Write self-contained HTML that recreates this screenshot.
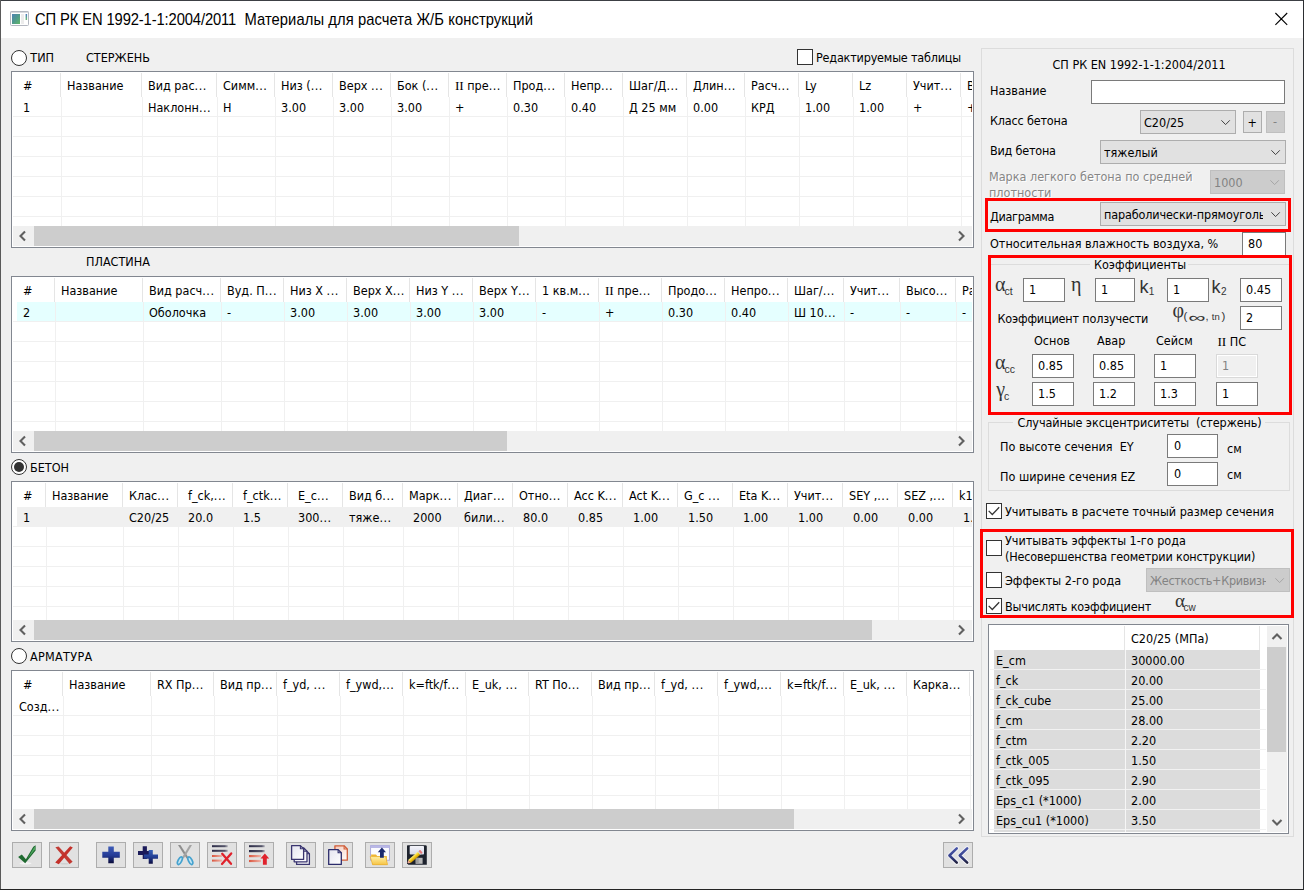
<!DOCTYPE html><html><head><meta charset="utf-8"><title>СП РК EN 1992-1-1:2004/2011</title><style>
*{box-sizing:border-box;margin:0;padding:0}
html,body{width:1304px;height:890px;overflow:hidden;background:#f0f0f0}
body{position:relative;font-family:"DejaVu Sans Condensed","DejaVu Sans","Liberation Sans",sans-serif;font-size:12.5px;color:#000;line-height:16px;font-stretch:condensed}
.a{position:absolute;white-space:nowrap}
.t{position:absolute;white-space:nowrap;height:16px;line-height:16px}
.dis{color:#868686}
.e{letter-spacing:0.5px}
.ii{font-family:"Liberation Serif",serif;font-stretch:normal;font-size:13.4px;letter-spacing:-0.15px;line-height:1px}
.tbl{position:absolute;border:1px solid #828790;background:#fff;overflow:hidden}
.hs{position:absolute;width:1px;background:#e5e5e5}
.vg{position:absolute;width:1px;background:#f0f0f0}
.hg{position:absolute;height:1px;background:#f0f0f0;left:0}
.sb{position:absolute;background:#f0f0f0}
.th{position:absolute;background:#cdcdcd}
.inp{position:absolute;background:#fff;border:1px solid #7a7a7a;height:24px}
.cmb{position:absolute;background:#e1e1e1;border:1px solid #adadad;height:24px;overflow:hidden}
.cmbd{position:absolute;background:#cccccc;border:1px solid #bfbfbf;height:24px;overflow:hidden}
.btn{position:absolute;background:#e1e1e1;border:1px solid #adadad}
.cb{position:absolute;width:16px;height:16px;background:#fff;border:1px solid #333}
.rd{position:absolute;width:16px;height:16px;background:#fff;border:1px solid #333;border-radius:50%}
.red{position:absolute;border:3px solid #ff0000}
.grp{position:absolute;border:1px solid #dcdcdc}
.ser{font-family:"Liberation Serif",serif;font-stretch:normal}
.ar{font-family:"Liberation Sans",sans-serif;font-stretch:normal}
</style></head><body>
<div class="a" style="left:0px;top:0px;width:1304px;height:1px;background:#3c3f44"></div>
<div class="a" style="left:0px;top:0px;width:1px;height:890px;background:#5a5a5a"></div>
<div class="a" style="left:0px;top:889px;width:1304px;height:1px;background:#242424"></div>
<div class="a" style="left:1303px;top:0px;width:1px;height:890px;background:#2c2e32"></div>
<div class="a" style="left:1px;top:1px;width:1302px;height:37px;background:#fff"></div>
<svg class="a" style="left:10px;top:11px" width="19" height="15" viewBox="0 0 19 15"><defs><linearGradient id="ig" x1="0" y1="0" x2="1" y2="1"><stop offset="0" stop-color="#4f82b4"/><stop offset="0.5" stop-color="#4f9a8c"/><stop offset="1" stop-color="#62b868"/></linearGradient><linearGradient id="ig2" x1="0" y1="0" x2="0" y2="1"><stop offset="0" stop-color="#4a78c0"/><stop offset="1" stop-color="#6cc070"/></linearGradient></defs><rect x="0.5" y="0.5" width="18" height="14" rx="1" fill="#fff" stroke="#b3b7c0"/><rect x="0.5" y="0.5" width="18" height="1" fill="#b3b7c0"/><rect x="2" y="3" width="8" height="10" fill="url(#ig)"/><rect x="11" y="3" width="3" height="10" fill="#ececec"/><rect x="15.6" y="3" width="1.5" height="6" fill="url(#ig2)"/></svg>
<div class="a ar" id="title" style="left:35px;top:10px;font-size:15.75px;line-height:20px;height:20px;transform:scaleX(0.9364);transform-origin:0 0;"><span style="letter-spacing:-0.12px">СП РК EN 1992-1-1:2004/2011</span>  <span style="letter-spacing:0.085px">Материалы для расчета Ж/Б конструкций</span></div>
<svg class="a" style="left:1274px;top:12px" width="14" height="14" viewBox="0 0 14 14"><path d="M1.4 1 L13.2 12.8 M13.2 1 L1.4 12.8" stroke="#000" stroke-width="1.1" fill="none"/></svg>
<div class="rd" style="left:11px;top:49.5px;width:16px;height:16px;"></div>
<div class="t " style="left:30.3px;top:50px;">ТИП</div>
<div class="t " style="left:86px;top:50px;">СТЕРЖЕНЬ</div>
<div class="t " style="left:86px;top:254px;">ПЛАСТИНА</div>
<div class="rd" style="left:11px;top:459px;width:16px;height:16px;"></div>
<div class="a" style="left:14px;top:462px;width:10px;height:10px;background:#333;border-radius:50%"></div>
<div class="t " style="left:30px;top:460px;">БЕТОН</div>
<div class="rd" style="left:11px;top:648px;width:16px;height:16px;"></div>
<div class="t " style="left:30px;top:649px;letter-spacing:0.3px">АРМАТУРА</div>
<div class="cb" style="left:797px;top:49px;width:16px;height:16px;"></div>
<div class="t " style="left:816px;top:50px;letter-spacing:-0.19px">Редактируемые таблицы</div>
<div class="tbl" style="left:11px;top:71px;width:963px;height:177px">
<div class="a" style="left:1px;top:1px;width:959px;height:173px;overflow:hidden">
<div class="hs" style="left:47px;top:0px;height:24px"></div>
<div class="hs" style="left:128px;top:0px;height:24px"></div>
<div class="hs" style="left:203px;top:0px;height:24px"></div>
<div class="hs" style="left:261px;top:0px;height:24px"></div>
<div class="hs" style="left:319px;top:0px;height:24px"></div>
<div class="hs" style="left:377px;top:0px;height:24px"></div>
<div class="hs" style="left:435px;top:0px;height:24px"></div>
<div class="hs" style="left:493px;top:0px;height:24px"></div>
<div class="hs" style="left:551px;top:0px;height:24px"></div>
<div class="hs" style="left:609px;top:0px;height:24px"></div>
<div class="hs" style="left:673px;top:0px;height:24px"></div>
<div class="hs" style="left:731px;top:0px;height:24px"></div>
<div class="hs" style="left:785px;top:0px;height:24px"></div>
<div class="hs" style="left:839px;top:0px;height:24px"></div>
<div class="hs" style="left:893px;top:0px;height:24px"></div>
<div class="hs" style="left:947px;top:0px;height:24px"></div>
<div class="vg" style="left:48px;top:24px;height:129px"></div>
<div class="vg" style="left:129px;top:24px;height:129px"></div>
<div class="vg" style="left:204px;top:24px;height:129px"></div>
<div class="vg" style="left:262px;top:24px;height:129px"></div>
<div class="vg" style="left:320px;top:24px;height:129px"></div>
<div class="vg" style="left:378px;top:24px;height:129px"></div>
<div class="vg" style="left:436px;top:24px;height:129px"></div>
<div class="vg" style="left:494px;top:24px;height:129px"></div>
<div class="vg" style="left:552px;top:24px;height:129px"></div>
<div class="vg" style="left:610px;top:24px;height:129px"></div>
<div class="vg" style="left:674px;top:24px;height:129px"></div>
<div class="vg" style="left:732px;top:24px;height:129px"></div>
<div class="vg" style="left:786px;top:24px;height:129px"></div>
<div class="vg" style="left:840px;top:24px;height:129px"></div>
<div class="vg" style="left:894px;top:24px;height:129px"></div>
<div class="vg" style="left:948px;top:24px;height:129px"></div>
<div class="hg" style="top:43px;width:959px"></div>
<div class="hg" style="top:63px;width:959px"></div>
<div class="hg" style="top:83px;width:959px"></div>
<div class="hg" style="top:103px;width:959px"></div>
<div class="hg" style="top:123px;width:959px"></div>
<div class="hg" style="top:143px;width:959px"></div>
<div class="t" style="left:10px;top:5px">#</div>
<div class="t" style="left:54px;top:5px">Название</div>
<div class="t" style="left:135px;top:5px">Вид рас<span class="e">...</span></div>
<div class="t" style="left:210px;top:5px">Симм<span class="e">...</span></div>
<div class="t" style="left:268px;top:5px">Низ (<span class="e">...</span></div>
<div class="t" style="left:326px;top:5px">Верх <span class="e">...</span></div>
<div class="t" style="left:384px;top:5px">Бок (<span class="e">...</span></div>
<div class="t" style="left:442px;top:5px"><span class="ii">II</span> пре<span class="e">...</span></div>
<div class="t" style="left:500px;top:5px">Прод<span class="e">...</span></div>
<div class="t" style="left:558px;top:5px">Непр<span class="e">...</span></div>
<div class="t" style="left:616px;top:5px">Шаг/Д<span class="e">...</span></div>
<div class="t" style="left:680px;top:5px">Длин<span class="e">...</span></div>
<div class="t" style="left:738px;top:5px">Расч<span class="e">...</span></div>
<div class="t" style="left:792px;top:5px">Ly</div>
<div class="t" style="left:846px;top:5px">Lz</div>
<div class="t" style="left:900px;top:5px">Учит<span class="e">...</span></div>
<div class="t" style="left:954px;top:5px">В</div>
<div class="t" style="left:10px;top:27px">1</div>
<div class="t" style="left:135px;top:27px">Наклонн<span class="e">...</span></div>
<div class="t" style="left:210px;top:27px">Н</div>
<div class="t" style="left:268px;top:27px">3.00</div>
<div class="t" style="left:326px;top:27px">3.00</div>
<div class="t" style="left:384px;top:27px">3.00</div>
<div class="t" style="left:442px;top:27px">+</div>
<div class="t" style="left:500px;top:27px">0.30</div>
<div class="t" style="left:558px;top:27px">0.40</div>
<div class="t" style="left:616px;top:27px">Д 25 мм</div>
<div class="t" style="left:680px;top:27px">0.00</div>
<div class="t" style="left:738px;top:27px">КРД</div>
<div class="t" style="left:792px;top:27px">1.00</div>
<div class="t" style="left:846px;top:27px">1.00</div>
<div class="t" style="left:900px;top:27px">+</div>
<div class="t" style="left:954px;top:27px">+</div>
<div class="sb" style="left:0;top:153px;width:959px;height:20px"></div>
<div class="th" style="left:21px;top:153px;width:485px;height:20px"></div>
</div></div>
<svg class="a" style="left:15.5px;top:229px" width="14" height="14" viewBox="-7 -7 14 14"><path d="M2 -4.5 L-2.5 0 L2 4.5" stroke="#606060" stroke-width="2.1" fill="none"/></svg>
<svg class="a" style="left:953.8px;top:229px" width="14" height="14" viewBox="-7 -7 14 14"><path d="M-2 -4.5 L2.5 0 L-2 4.5" stroke="#606060" stroke-width="2.1" fill="none"/></svg>
<div class="tbl" style="left:11px;top:276px;width:963px;height:177px">
<div class="a" style="left:1px;top:1px;width:959px;height:173px;overflow:hidden">
<div class="a" style="left:4px;top:24px;width:955px;height:19px;background:#e5ffff"></div>
<div class="hs" style="left:41px;top:0px;height:24px"></div>
<div class="hs" style="left:129px;top:0px;height:24px"></div>
<div class="hs" style="left:207px;top:0px;height:24px"></div>
<div class="hs" style="left:270px;top:0px;height:24px"></div>
<div class="hs" style="left:333px;top:0px;height:24px"></div>
<div class="hs" style="left:396px;top:0px;height:24px"></div>
<div class="hs" style="left:459px;top:0px;height:24px"></div>
<div class="hs" style="left:522px;top:0px;height:24px"></div>
<div class="hs" style="left:585px;top:0px;height:24px"></div>
<div class="hs" style="left:648px;top:0px;height:24px"></div>
<div class="hs" style="left:711px;top:0px;height:24px"></div>
<div class="hs" style="left:774px;top:0px;height:24px"></div>
<div class="hs" style="left:830px;top:0px;height:24px"></div>
<div class="hs" style="left:886px;top:0px;height:24px"></div>
<div class="hs" style="left:942px;top:0px;height:24px"></div>
<div class="vg" style="left:42px;top:24px;height:129px"></div>
<div class="vg" style="left:130px;top:24px;height:129px"></div>
<div class="vg" style="left:208px;top:24px;height:129px"></div>
<div class="vg" style="left:271px;top:24px;height:129px"></div>
<div class="vg" style="left:334px;top:24px;height:129px"></div>
<div class="vg" style="left:397px;top:24px;height:129px"></div>
<div class="vg" style="left:460px;top:24px;height:129px"></div>
<div class="vg" style="left:523px;top:24px;height:129px"></div>
<div class="vg" style="left:586px;top:24px;height:129px"></div>
<div class="vg" style="left:649px;top:24px;height:129px"></div>
<div class="vg" style="left:712px;top:24px;height:129px"></div>
<div class="vg" style="left:775px;top:24px;height:129px"></div>
<div class="vg" style="left:831px;top:24px;height:129px"></div>
<div class="vg" style="left:887px;top:24px;height:129px"></div>
<div class="vg" style="left:943px;top:24px;height:129px"></div>
<div class="hg" style="top:43px;width:959px"></div>
<div class="hg" style="top:63px;width:959px"></div>
<div class="hg" style="top:83px;width:959px"></div>
<div class="hg" style="top:103px;width:959px"></div>
<div class="hg" style="top:123px;width:959px"></div>
<div class="hg" style="top:143px;width:959px"></div>
<div class="t" style="left:10px;top:5px">#</div>
<div class="t" style="left:48px;top:5px">Название</div>
<div class="t" style="left:136px;top:5px">Вид расч<span class="e">...</span></div>
<div class="t" style="left:214px;top:5px">Вуд. П<span class="e">...</span></div>
<div class="t" style="left:277px;top:5px">Низ X <span class="e">...</span></div>
<div class="t" style="left:340px;top:5px">Верх X<span class="e">...</span></div>
<div class="t" style="left:403px;top:5px">Низ Y <span class="e">...</span></div>
<div class="t" style="left:466px;top:5px">Верх Y<span class="e">...</span></div>
<div class="t" style="left:529px;top:5px">1 кв.м<span class="e">...</span></div>
<div class="t" style="left:592px;top:5px"><span class="ii">II</span> пре<span class="e">...</span></div>
<div class="t" style="left:655px;top:5px">Продо<span class="e">...</span></div>
<div class="t" style="left:718px;top:5px">Непро<span class="e">...</span></div>
<div class="t" style="left:781px;top:5px">Шаг/<span class="e">...</span></div>
<div class="t" style="left:837px;top:5px">Учит<span class="e">...</span></div>
<div class="t" style="left:893px;top:5px">Высо<span class="e">...</span></div>
<div class="t" style="left:949px;top:5px">Ра</div>
<div class="t" style="left:10px;top:27px">2</div>
<div class="t" style="left:136px;top:27px">Оболочка</div>
<div class="t" style="left:214px;top:27px">-</div>
<div class="t" style="left:277px;top:27px">3.00</div>
<div class="t" style="left:340px;top:27px">3.00</div>
<div class="t" style="left:403px;top:27px">3.00</div>
<div class="t" style="left:466px;top:27px">3.00</div>
<div class="t" style="left:529px;top:27px">-</div>
<div class="t" style="left:592px;top:27px">+</div>
<div class="t" style="left:655px;top:27px">0.30</div>
<div class="t" style="left:718px;top:27px">0.40</div>
<div class="t" style="left:781px;top:27px">Ш 10<span class="e">...</span></div>
<div class="t" style="left:837px;top:27px">-</div>
<div class="t" style="left:893px;top:27px">-</div>
<div class="t" style="left:949px;top:27px">-</div>
<div class="sb" style="left:0;top:153px;width:959px;height:20px"></div>
<div class="th" style="left:21px;top:153px;width:473px;height:20px"></div>
</div></div>
<svg class="a" style="left:15.5px;top:434px" width="14" height="14" viewBox="-7 -7 14 14"><path d="M2 -4.5 L-2.5 0 L2 4.5" stroke="#606060" stroke-width="2.1" fill="none"/></svg>
<svg class="a" style="left:953.8px;top:434px" width="14" height="14" viewBox="-7 -7 14 14"><path d="M-2 -4.5 L2.5 0 L-2 4.5" stroke="#606060" stroke-width="2.1" fill="none"/></svg>
<div class="tbl" style="left:11px;top:481px;width:963px;height:161px">
<div class="a" style="left:1px;top:1px;width:959px;height:157px;overflow:hidden">
<div class="a" style="left:4px;top:24px;width:955px;height:19px;background:#f0f0f0"></div>
<div class="hs" style="left:32px;top:0px;height:24px"></div>
<div class="hs" style="left:109px;top:0px;height:24px"></div>
<div class="hs" style="left:164px;top:0px;height:24px"></div>
<div class="hs" style="left:219px;top:0px;height:24px"></div>
<div class="hs" style="left:274px;top:0px;height:24px"></div>
<div class="hs" style="left:329px;top:0px;height:24px"></div>
<div class="hs" style="left:389px;top:0px;height:24px"></div>
<div class="hs" style="left:444px;top:0px;height:24px"></div>
<div class="hs" style="left:499px;top:0px;height:24px"></div>
<div class="hs" style="left:554px;top:0px;height:24px"></div>
<div class="hs" style="left:609px;top:0px;height:24px"></div>
<div class="hs" style="left:664px;top:0px;height:24px"></div>
<div class="hs" style="left:719px;top:0px;height:24px"></div>
<div class="hs" style="left:774px;top:0px;height:24px"></div>
<div class="hs" style="left:829px;top:0px;height:24px"></div>
<div class="hs" style="left:884px;top:0px;height:24px"></div>
<div class="hs" style="left:939px;top:0px;height:24px"></div>
<div class="vg" style="left:33px;top:24px;height:113px"></div>
<div class="vg" style="left:110px;top:24px;height:113px"></div>
<div class="vg" style="left:165px;top:24px;height:113px"></div>
<div class="vg" style="left:220px;top:24px;height:113px"></div>
<div class="vg" style="left:275px;top:24px;height:113px"></div>
<div class="vg" style="left:330px;top:24px;height:113px"></div>
<div class="vg" style="left:390px;top:24px;height:113px"></div>
<div class="vg" style="left:445px;top:24px;height:113px"></div>
<div class="vg" style="left:500px;top:24px;height:113px"></div>
<div class="vg" style="left:555px;top:24px;height:113px"></div>
<div class="vg" style="left:610px;top:24px;height:113px"></div>
<div class="vg" style="left:665px;top:24px;height:113px"></div>
<div class="vg" style="left:720px;top:24px;height:113px"></div>
<div class="vg" style="left:775px;top:24px;height:113px"></div>
<div class="vg" style="left:830px;top:24px;height:113px"></div>
<div class="vg" style="left:885px;top:24px;height:113px"></div>
<div class="vg" style="left:940px;top:24px;height:113px"></div>
<div class="hg" style="top:43px;width:959px"></div>
<div class="hg" style="top:63px;width:959px"></div>
<div class="hg" style="top:83px;width:959px"></div>
<div class="hg" style="top:103px;width:959px"></div>
<div class="hg" style="top:123px;width:959px"></div>
<div class="t" style="left:10px;top:5px">#</div>
<div class="t" style="left:39px;top:5px">Название</div>
<div class="t" style="left:116px;top:5px">Клас<span class="e">...</span></div>
<div class="t" style="left:175px;top:5px">f_ck,<span class="e">...</span></div>
<div class="t" style="left:230px;top:5px">f_ctk<span class="e">...</span></div>
<div class="t" style="left:285px;top:5px">E_c<span class="e">...</span></div>
<div class="t" style="left:336px;top:5px">Вид б<span class="e">...</span></div>
<div class="t" style="left:396px;top:5px">Марк<span class="e">...</span></div>
<div class="t" style="left:451px;top:5px">Диаг<span class="e">...</span></div>
<div class="t" style="left:506px;top:5px">Отно<span class="e">...</span></div>
<div class="t" style="left:561px;top:5px">Acc K<span class="e">...</span></div>
<div class="t" style="left:616px;top:5px">Act K<span class="e">...</span></div>
<div class="t" style="left:671px;top:5px">G_c <span class="e">...</span></div>
<div class="t" style="left:726px;top:5px">Eta K<span class="e">...</span></div>
<div class="t" style="left:781px;top:5px">Учит<span class="e">...</span></div>
<div class="t" style="left:836px;top:5px">SEY ,<span class="e">...</span></div>
<div class="t" style="left:891px;top:5px">SEZ ,<span class="e">...</span></div>
<div class="t" style="left:946px;top:5px">k1</div>
<div class="t" style="left:10px;top:27px">1</div>
<div class="t" style="left:116px;top:27px">C20/25</div>
<div class="t" style="left:175px;top:27px">20.0</div>
<div class="t" style="left:230px;top:27px">1.5</div>
<div class="t" style="left:285px;top:27px">300<span class="e">...</span></div>
<div class="t" style="left:336px;top:27px">тяже<span class="e">...</span></div>
<div class="t" style="left:400px;top:27px">2000</div>
<div class="t" style="left:451px;top:27px">били<span class="e">...</span></div>
<div class="t" style="left:510px;top:27px">80.0</div>
<div class="t" style="left:565px;top:27px">0.85</div>
<div class="t" style="left:620px;top:27px">1.00</div>
<div class="t" style="left:675px;top:27px">1.50</div>
<div class="t" style="left:730px;top:27px">1.00</div>
<div class="t" style="left:785px;top:27px">1.00</div>
<div class="t" style="left:840px;top:27px">0.00</div>
<div class="t" style="left:895px;top:27px">0.00</div>
<div class="t" style="left:950px;top:27px">1.</div>
<div class="sb" style="left:0;top:137px;width:959px;height:20px"></div>
<div class="th" style="left:21px;top:137px;width:838px;height:20px"></div>
</div></div>
<svg class="a" style="left:15.5px;top:623px" width="14" height="14" viewBox="-7 -7 14 14"><path d="M2 -4.5 L-2.5 0 L2 4.5" stroke="#606060" stroke-width="2.1" fill="none"/></svg>
<svg class="a" style="left:953.8px;top:623px" width="14" height="14" viewBox="-7 -7 14 14"><path d="M-2 -4.5 L2.5 0 L-2 4.5" stroke="#606060" stroke-width="2.1" fill="none"/></svg>
<div class="tbl" style="left:11px;top:670px;width:963px;height:161px">
<div class="a" style="left:1px;top:1px;width:959px;height:157px;overflow:hidden">
<div class="hs" style="left:49px;top:0px;height:24px"></div>
<div class="hs" style="left:137px;top:0px;height:24px"></div>
<div class="hs" style="left:200px;top:0px;height:24px"></div>
<div class="hs" style="left:263px;top:0px;height:24px"></div>
<div class="hs" style="left:326px;top:0px;height:24px"></div>
<div class="hs" style="left:389px;top:0px;height:24px"></div>
<div class="hs" style="left:452px;top:0px;height:24px"></div>
<div class="hs" style="left:515px;top:0px;height:24px"></div>
<div class="hs" style="left:578px;top:0px;height:24px"></div>
<div class="hs" style="left:641px;top:0px;height:24px"></div>
<div class="hs" style="left:704px;top:0px;height:24px"></div>
<div class="hs" style="left:767px;top:0px;height:24px"></div>
<div class="hs" style="left:830px;top:0px;height:24px"></div>
<div class="hs" style="left:893px;top:0px;height:24px"></div>
<div class="hs" style="left:956px;top:0px;height:24px"></div>
<div class="vg" style="left:50px;top:24px;height:113px"></div>
<div class="vg" style="left:138px;top:24px;height:113px"></div>
<div class="vg" style="left:201px;top:24px;height:113px"></div>
<div class="vg" style="left:264px;top:24px;height:113px"></div>
<div class="vg" style="left:327px;top:24px;height:113px"></div>
<div class="vg" style="left:390px;top:24px;height:113px"></div>
<div class="vg" style="left:453px;top:24px;height:113px"></div>
<div class="vg" style="left:516px;top:24px;height:113px"></div>
<div class="vg" style="left:579px;top:24px;height:113px"></div>
<div class="vg" style="left:642px;top:24px;height:113px"></div>
<div class="vg" style="left:705px;top:24px;height:113px"></div>
<div class="vg" style="left:768px;top:24px;height:113px"></div>
<div class="vg" style="left:831px;top:24px;height:113px"></div>
<div class="vg" style="left:894px;top:24px;height:113px"></div>
<div class="vg" style="left:957px;top:24px;height:113px"></div>
<div class="hg" style="top:43px;width:959px"></div>
<div class="hg" style="top:63px;width:959px"></div>
<div class="hg" style="top:83px;width:959px"></div>
<div class="hg" style="top:103px;width:959px"></div>
<div class="hg" style="top:123px;width:959px"></div>
<div class="t" style="left:10px;top:5px">#</div>
<div class="t" style="left:56px;top:5px">Название</div>
<div class="t" style="left:144px;top:5px">RX Пр<span class="e">...</span></div>
<div class="t" style="left:207px;top:5px">Вид пр<span class="e">...</span></div>
<div class="t" style="left:270px;top:5px">f_yd, <span class="e">...</span></div>
<div class="t" style="left:333px;top:5px">f_ywd,<span class="e">...</span></div>
<div class="t" style="left:396px;top:5px">k=ftk/f<span class="e">...</span></div>
<div class="t" style="left:459px;top:5px">E_uk, <span class="e">...</span></div>
<div class="t" style="left:522px;top:5px">RT По<span class="e">...</span></div>
<div class="t" style="left:585px;top:5px">Вид пр<span class="e">...</span></div>
<div class="t" style="left:648px;top:5px">f_yd, <span class="e">...</span></div>
<div class="t" style="left:711px;top:5px">f_ywd,<span class="e">...</span></div>
<div class="t" style="left:774px;top:5px">k=ftk/f<span class="e">...</span></div>
<div class="t" style="left:837px;top:5px">E_uk, <span class="e">...</span></div>
<div class="t" style="left:900px;top:5px">Карка<span class="e">...</span></div>
<div class="t" style="left:6px;top:27px">Созд<span class="e">...</span></div>
<div class="sb" style="left:0;top:137px;width:959px;height:20px"></div>
<div class="th" style="left:21px;top:137px;width:760px;height:20px"></div>
</div></div>
<svg class="a" style="left:15.5px;top:812px" width="14" height="14" viewBox="-7 -7 14 14"><path d="M2 -4.5 L-2.5 0 L2 4.5" stroke="#606060" stroke-width="2.1" fill="none"/></svg>
<svg class="a" style="left:953.8px;top:812px" width="14" height="14" viewBox="-7 -7 14 14"><path d="M-2 -4.5 L2.5 0 L-2 4.5" stroke="#606060" stroke-width="2.1" fill="none"/></svg>
<div class="btn" style="left:12px;top:842px;width:30px;height:26px;"><svg style="position:absolute;left:-1px;top:-1px" width="30" height="26" viewBox="0 0 30 26"><ellipse cx="13.5" cy="21.3" rx="6" ry="1.2" fill="#f4f4f4"/><path d="M6.1 14.9 L9.8 12.6 L13.9 17.3 L21.3 4.7 L23.6 3.2 L23.6 8.4 L13.2 21.3 Z" fill="#1f6a30"/><path d="M15.2 17 L22.4 5 L23 5.2 L23 7.4 Z" fill="#4fa860"/></svg></div>
<div class="btn" style="left:49px;top:842px;width:30px;height:26px;"><svg style="position:absolute;left:-1px;top:-1px" width="30" height="26" viewBox="0 0 30 26"><ellipse cx="15.5" cy="21.8" rx="4.5" ry="0.8" fill="#cfcfcf"/><path d="M6.4 5.2 L9.6 4.4 L23.6 19.8 L20.6 21.9 Z" fill="#c23a33"/><path d="M21.2 4.2 L23.8 5.4 L9.8 22.2 L6.2 20.4 Z" fill="#c4302a"/></svg></div>
<div class="btn" style="left:96px;top:842px;width:30px;height:26px;"><svg style="position:absolute;left:-1px;top:-1px" width="30" height="26" viewBox="0 0 30 26"><defs><linearGradient id="gp" x1="0" y1="0" x2="0" y2="1"><stop offset="0" stop-color="#3e5cb8"/><stop offset="0.55" stop-color="#243a94"/><stop offset="1" stop-color="#0a0a38"/></linearGradient></defs><path d="M12.3 4.5 H17.8 V9.8 H23.8 V15.8 H17.8 V21.3 H12.3 V15.8 H6.3 V9.8 H12.3 Z" fill="url(#gp)"/></svg></div>
<div class="btn" style="left:133px;top:842px;width:30px;height:26px;"><svg style="position:absolute;left:-1px;top:-1px" width="30" height="26" viewBox="0 0 30 26"><defs><linearGradient id="gp2" x1="0" y1="0" x2="0" y2="1"><stop offset="0" stop-color="#3560b8"/><stop offset="0.5" stop-color="#233f94"/><stop offset="1" stop-color="#0c0c40"/></linearGradient></defs><path d="M9.7 4.3 H13.9 V8.9 H18.5 V13 H13.9 V17 H9.7 V13 H5 V8.9 H9.7 Z" fill="#1b1b5a"/><path d="M15.7 8 H19.8 V12.5 H25 V16.7 H19.8 V21.8 H15.7 V16.7 H11 V12.5 H15.7 Z" fill="url(#gp2)"/></svg></div>
<div class="btn" style="left:170px;top:842px;width:30px;height:26px;"><svg style="position:absolute;left:-1px;top:-1px" width="30" height="26" viewBox="0 0 30 26"><path d="M8 3 L10.4 3 L18.4 15.4 L16.6 16.4 Z" fill="#8e8e8e"/><path d="M22 3 L19.6 3 L12 15.4 L13.8 16.4 Z" fill="#a4a4a4"/><ellipse cx="9.9" cy="18.7" rx="1.8" ry="4.1" transform="rotate(26 9.9 18.7)" fill="#c4e6f4" stroke="#45a2cf" stroke-width="1.7"/><ellipse cx="20.3" cy="18.7" rx="1.8" ry="4.1" transform="rotate(-26 20.3 18.7)" fill="#c4e6f4" stroke="#45a2cf" stroke-width="1.7"/></svg></div>
<div class="btn" style="left:207px;top:842px;width:30px;height:26px;"><svg style="position:absolute;left:-1px;top:-1px" width="30" height="26" viewBox="0 0 30 26"><defs><linearGradient id="gd" x1="0" y1="0" x2="1" y2="0"><stop offset="0" stop-color="#2c2c48"/><stop offset="0.8" stop-color="#55556a"/><stop offset="1" stop-color="#b0b0b8"/></linearGradient><linearGradient id="gr" x1="0" y1="0" x2="1" y2="0"><stop offset="0" stop-color="#d9553f"/><stop offset="1" stop-color="#f0b4a8"/></linearGradient></defs><rect x="5" y="3.2" width="15.8" height="2" fill="url(#gd)"/><rect x="5" y="7.8" width="15.8" height="2" fill="url(#gd)"/><rect x="5" y="13" width="10" height="2" fill="url(#gr)"/><rect x="5" y="17.6" width="10" height="2" fill="url(#gr)"/><path d="M15.2 11.8 L24 21.8 M24.2 11.4 L15 22" stroke="#e0222c" stroke-width="2.3" stroke-linecap="round" fill="none"/></svg></div>
<div class="btn" style="left:244px;top:842px;width:30px;height:26px;"><svg style="position:absolute;left:-1px;top:-1px" width="30" height="26" viewBox="0 0 30 26"><rect x="5" y="3.2" width="15.8" height="2" fill="url(#gd)"/><rect x="5" y="8" width="15.8" height="2.2" fill="url(#gd)"/><rect x="5" y="13" width="12" height="2.2" fill="url(#gr)"/><rect x="5" y="17.9" width="12" height="2.2" fill="url(#gr)"/><path d="M20.85 11.4 L25.2 16.6 H22.8 V22.7 H18.9 V16.6 H16.5 Z" fill="#e0222c"/></svg></div>
<div class="btn" style="left:286px;top:842px;width:30px;height:26px;"><svg style="position:absolute;left:-1px;top:-1px" width="30" height="26" viewBox="0 0 30 26"><defs><linearGradient id="gw" x1="0" y1="0" x2="1" y2="1"><stop offset="0" stop-color="#e4e4f0"/><stop offset="1" stop-color="#ffffff"/></linearGradient><linearGradient id="go" x1="0" y1="0" x2="1" y2="1"><stop offset="0" stop-color="#f4c8b8"/><stop offset="1" stop-color="#ffffff"/></linearGradient></defs><path d="M10.6 8.6 H20.2 L23.4 11.8 V22.4 H10.6 Z" fill="url(#gw)" stroke="#3a3570" stroke-width="1.3" stroke-linejoin="round"/><path d="M20.2 8.6 V11.8 H23.4" fill="none" stroke="#3a3570" stroke-width="1.1"/><path d="M8.2 6 H17.8 L21 9.2 V19.8 H8.2 Z" fill="url(#gw)" stroke="#3a3570" stroke-width="1.3" stroke-linejoin="round"/><path d="M17.8 6 V9.2 H21" fill="none" stroke="#3a3570" stroke-width="1.1"/><path d="M5.6 3.6 H14.4 L17.6 6.8 V17.4 H5.6 Z" fill="url(#gw)" stroke="#3a3570" stroke-width="1.3" stroke-linejoin="round"/><path d="M14.4 3.6 V6.8 H17.6" fill="none" stroke="#3a3570" stroke-width="1.1"/></svg></div>
<div class="btn" style="left:323px;top:842px;width:30px;height:26px;"><svg style="position:absolute;left:-1px;top:-1px" width="30" height="26" viewBox="0 0 30 26"><defs><linearGradient id="gw" x1="0" y1="0" x2="1" y2="1"><stop offset="0" stop-color="#e4e4f0"/><stop offset="1" stop-color="#ffffff"/></linearGradient><linearGradient id="go" x1="0" y1="0" x2="1" y2="1"><stop offset="0" stop-color="#f4c8b8"/><stop offset="1" stop-color="#ffffff"/></linearGradient></defs><path d="M11.9 3.8 H21.1 L24.3 7 V18.2 H11.9 Z" fill="url(#go)" stroke="#cf5c38" stroke-width="1.3" stroke-linejoin="round"/><path d="M21.1 3.8 V7 H24.3" fill="none" stroke="#cf5c38" stroke-width="1.1"/><path d="M5.7 7.6 H15.1 L18.3 10.8 V22.4 H5.7 Z" fill="url(#gw)" stroke="#2c2c6c" stroke-width="1.3" stroke-linejoin="round"/><path d="M15.1 7.6 V10.8 H18.3" fill="none" stroke="#2c2c6c" stroke-width="1.1"/></svg></div>
<div class="btn" style="left:365px;top:842px;width:30px;height:26px;"><svg style="position:absolute;left:-1px;top:-1px" width="30" height="26" viewBox="0 0 30 26"><defs><linearGradient id="gf" x1="0" y1="0" x2="0" y2="1"><stop offset="0" stop-color="#fff0a8"/><stop offset="1" stop-color="#f6c444"/></linearGradient></defs><rect x="5.6" y="3.6" width="18.8" height="14.6" fill="#fbfbff" stroke="#a6a4d8" stroke-width="0.9"/><rect x="5.6" y="3.6" width="18.8" height="2.4" fill="#b9b7e6"/><path d="M6 12.6 H11 L12.2 14 H21.8 V22.4 H7.4 Z" fill="#f0b530"/><path d="M5.2 14.6 H20.6 L22.6 22.7 H7.6 Z" fill="url(#gf)" stroke="#e8a820" stroke-width="0.6"/><path d="M16.9 5.5 L21 10.2 H18.8 V15.8 H15 V10.2 H12.8 Z" fill="#1c2a6e"/></svg></div>
<div class="btn" style="left:402px;top:842px;width:30px;height:26px;"><svg style="position:absolute;left:-1px;top:-1px" width="30" height="26" viewBox="0 0 30 26"><defs><linearGradient id="gl" x1="0" y1="0" x2="0" y2="1"><stop offset="0" stop-color="#f4f4fa"/><stop offset="1" stop-color="#d4d8e8"/></linearGradient><linearGradient id="gy" x1="0" y1="0" x2="0" y2="1"><stop offset="0" stop-color="#fff080"/><stop offset="0.5" stop-color="#f0c818"/><stop offset="1" stop-color="#c89000"/></linearGradient></defs><path d="M5.6 3.2 H23.4 Q24.8 3.2 24.8 4.6 V22.7 H6.4 L5 21.3 V3.8 Q5 3.2 5.6 3.2 Z" fill="#1d222d"/><rect x="7.7" y="4" width="14.3" height="8.6" rx="0.8" fill="url(#gl)"/><rect x="13.7" y="15.8" width="6.9" height="6" fill="#b8b8b8"/><rect x="13.7" y="15.8" width="3" height="6" fill="#9c9c9c"/><g transform="rotate(-40.5 12.6 15.1)"><rect x="5.8" y="13.1" width="12.6" height="4" fill="url(#gy)"/><path d="M5.8 13.1 L3.2 15.1 L5.8 17.1 Z" fill="#f0a890"/><rect x="18.4" y="13.1" width="1.2" height="4" fill="#c8c8c8"/><rect x="19.6" y="13.1" width="2" height="4" rx="0.8" fill="#e87878"/></g></svg></div>
<div class="btn" style="left:943px;top:842px;width:30px;height:26px;"><svg style="position:absolute;left:-1px;top:-1px" width="30" height="26" viewBox="0 0 30 26"><defs><linearGradient id="gll" gradientUnits="userSpaceOnUse" x1="0" y1="6" x2="0" y2="21"><stop offset="0" stop-color="#4a58a8"/><stop offset="0.6" stop-color="#36418c"/><stop offset="1" stop-color="#20203c"/></linearGradient></defs><path d="M13.8 6.3 L6.4 13.5 L13.8 20.7 M24.2 6.3 L16.7 13.5 L24.2 20.7" stroke="#f2f2f6" stroke-width="4.4" fill="none" stroke-linecap="round" stroke-linejoin="round"/><path d="M13.8 6.3 L6.4 13.5 L13.8 20.7 M24.2 6.3 L16.7 13.5 L24.2 20.7" stroke="url(#gll)" stroke-width="2.5" fill="none" stroke-linecap="round" stroke-linejoin="round"/></svg></div>
<div class="grp" style="left:981px;top:48px;width:313px;height:789px;"></div>
<div class="t " style="left:1052.5px;top:57px;">СП РК EN 1992-1-1:2004/2011</div>
<div class="t " style="left:990px;top:83px;">Название</div>
<div class="inp" style="left:1091px;top:80px;width:194px;height:24px;"></div>
<div class="t " style="left:990px;top:113px;letter-spacing:-0.17px">Класс бетона</div>
<div class="cmb" style="left:1140px;top:110px;width:96px;height:24px;"><div class="t" style="left:3px;top:4px;color:#000;width:70px;overflow:hidden;letter-spacing:0px">C20/25</div><svg style="position:absolute;right:4px;top:7px" width="12" height="8" viewBox="0 0 12 8"><path d="M2.4 2.3 L6.6 6.6 L10.8 2.3" stroke="#404040" stroke-width="1" fill="none"/></svg></div>
<div class="btn" style="left:1243px;top:111px;width:19px;height:22px;"><div class="t" style="left:3.6px;top:2.7px;font-size:12.5px">+</div></div>
<div class="a" style="left:1266px;top:111px;width:19px;height:22px;background:#cccccc;border:1px solid #bfbfbf"><div class="t" style="left:6px;top:2px;color:#838383">-</div></div>
<div class="t " style="left:990px;top:143px;letter-spacing:-0.22px">Вид бетона</div>
<div class="cmb" style="left:1100px;top:140px;width:186px;height:24px;"><div class="t" style="left:3px;top:4px;color:#000;width:160px;overflow:hidden;letter-spacing:0px">тяжелый</div><svg style="position:absolute;right:4px;top:7px" width="12" height="8" viewBox="0 0 12 8"><path d="M2.4 2.3 L6.6 6.6 L10.8 2.3" stroke="#404040" stroke-width="1" fill="none"/></svg></div>
<div class="t dis" style="left:989px;top:169px;text-shadow:1px 1px 0 #fff">Марка легкого бетона по средней</div>
<div class="t dis" style="left:989px;top:185px;text-shadow:1px 1px 0 #fff">плотности</div>
<div class="cmbd" style="left:1210px;top:170px;width:75px;height:24px;"><div class="t" style="left:3px;top:4px;color:#838383;width:49px;overflow:hidden;letter-spacing:0px">1000</div><svg style="position:absolute;right:4px;top:7px" width="12" height="8" viewBox="0 0 12 8"><path d="M2.4 2.3 L6.6 6.6 L10.8 2.3" stroke="#a6a6a6" stroke-width="1" fill="none"/></svg></div>
<div class="t " style="left:990px;top:209px;letter-spacing:-0.3px">Диаграмма</div>
<div class="cmb" style="left:1100px;top:202px;width:186px;height:24px;"><div class="t" style="left:3px;top:4px;color:#000;width:158.5px;overflow:hidden;letter-spacing:-0.13px">параболически-прямоугольная</div><svg style="position:absolute;right:4px;top:7px" width="12" height="8" viewBox="0 0 12 8"><path d="M2.4 2.3 L6.6 6.6 L10.8 2.3" stroke="#404040" stroke-width="1" fill="none"/></svg></div>
<div class="t " style="left:990px;top:236px;">Относительная влажность воздуха, %</div>
<div class="inp" style="left:1242px;top:232px;width:44px;height:24px;"><div class="t" style="left:5px;top:3px">80</div></div>
<div class="grp" style="left:990px;top:264px;width:300px;height:150px;border-bottom:none"></div>
<div class="a" style="left:1090px;top:260px;width:98px;height:10px;background:#f0f0f0"></div>
<div class="t " style="left:1094px;top:257px;">Коэффициенты</div>
<div class="a ser" style="left:995px;top:264.07px;font-size:20px;line-height:40px;height:40px;color:#333;">α</div>
<div class="a ar" style="left:1004.6px;top:281.46px;font-size:10.5px;line-height:21px;height:21px;color:#333;">ct</div>
<div class="inp" style="left:1023px;top:278px;width:42px;height:24px;"><div class="t" style="left:5px;top:3px">1</div></div>
<div class="a ser" style="left:1071px;top:264.07px;font-size:20px;line-height:40px;height:40px;color:#333;">η</div>
<div class="inp" style="left:1095px;top:278px;width:40px;height:24px;"><div class="t" style="left:5px;top:3px">1</div></div>
<div class="a ar" style="left:1139.5px;top:269.26px;font-size:18px;line-height:36px;height:36px;color:#333;">k</div>
<div class="a ar" style="left:1148.8px;top:282.04px;font-size:10px;line-height:20px;height:20px;color:#333;">1</div>
<div class="inp" style="left:1167px;top:278px;width:42px;height:24px;"><div class="t" style="left:5px;top:3px">1</div></div>
<div class="a ar" style="left:1211.5px;top:269.26px;font-size:18px;line-height:36px;height:36px;color:#333;">k</div>
<div class="a ar" style="left:1221px;top:282.04px;font-size:10px;line-height:20px;height:20px;color:#333;">2</div>
<div class="inp" style="left:1240px;top:278px;width:42px;height:24px;"><div class="t" style="left:5px;top:3px">0.45</div></div>
<div class="t " style="left:997.5px;top:311px;letter-spacing:-0.18px">Коэффициент ползучести</div>
<div class="a ser" style="left:1172.5px;top:289.57px;font-size:20px;line-height:40px;height:40px;color:#333;">φ</div>
<div class="a ar" style="left:1183.4px;top:305.32px;font-size:11.5px;line-height:23px;height:23px;color:#333;">(</div>
<div class="a ar" style="left:1188px;top:301.7px;font-size:15px;line-height:30px;height:30px;color:#333;transform:scale(1.6,0.87);transform-origin:0 20.1975px">∞</div>
<div class="a ar" style="left:1205.6px;top:305.19px;font-size:11px;line-height:22px;height:22px;color:#333;">,</div>
<div class="a ar" style="left:1211.8px;top:307.21px;font-size:9.5px;line-height:19px;height:19px;color:#333;">tn</div>
<div class="a ar" style="left:1221.4px;top:305.32px;font-size:11.5px;line-height:23px;height:23px;color:#333;">)</div>
<div class="inp" style="left:1240px;top:306px;width:42px;height:24px;"><div class="t" style="left:5px;top:3px">2</div></div>
<div class="t " style="left:1034px;top:333px;">Основ</div>
<div class="t " style="left:1097px;top:333px;">Авар</div>
<div class="t " style="left:1156px;top:333px;">Сейсм</div>
<div class="t " style="left:1217.5px;top:334px;"><span class="ii">II</span> ПС</div>
<div class="a ser" style="left:995px;top:342.07px;font-size:20px;line-height:40px;height:40px;color:#333;">α</div>
<div class="a ar" style="left:1004.6px;top:359.46px;font-size:10.5px;line-height:21px;height:21px;color:#333;">cc</div>
<div class="inp" style="left:1032px;top:354px;width:42px;height:24px;"><div class="t" style="left:5px;top:3px">0.85</div></div>
<div class="inp" style="left:1093px;top:354px;width:42px;height:24px;"><div class="t" style="left:5px;top:3px">0.85</div></div>
<div class="inp" style="left:1154px;top:354px;width:42px;height:24px;"><div class="t" style="left:5px;top:3px">1</div></div>
<div class="a" style="left:1216px;top:354px;width:42px;height:24px;background:#f0f0f0;border:1px solid #d9d9d9;box-shadow:0 0 0 1px #fff inset"><div class="t" style="left:5px;top:3px;color:#838383">1</div></div>
<div class="a ser" style="left:996.3px;top:368.87px;font-size:20px;line-height:40px;height:40px;color:#333;">γ</div>
<div class="a ar" style="left:1004px;top:386.36px;font-size:10.5px;line-height:21px;height:21px;color:#333;">c</div>
<div class="inp" style="left:1032px;top:382px;width:42px;height:24px;"><div class="t" style="left:5px;top:3px">1.5</div></div>
<div class="inp" style="left:1093px;top:382px;width:42px;height:24px;"><div class="t" style="left:5px;top:3px">1.2</div></div>
<div class="inp" style="left:1154px;top:382px;width:42px;height:24px;"><div class="t" style="left:5px;top:3px">1.3</div></div>
<div class="inp" style="left:1216px;top:382px;width:42px;height:24px;"><div class="t" style="left:5px;top:3px">1</div></div>
<div class="grp" style="left:988px;top:422px;width:302px;height:69px;"></div>
<div class="a" style="left:1013px;top:417px;width:252px;height:12px;background:#f0f0f0"></div>
<div class="t " style="left:1017.5px;top:415px;letter-spacing:-0.09px">Случайные эксцентриситеты  (стержень)</div>
<div class="t " style="left:1000px;top:439px;">По высоте сечения  EY</div>
<div class="inp" style="left:1167px;top:434px;width:51px;height:24px;"><div class="t" style="left:6px;top:3px">0</div></div>
<div class="t " style="left:1227px;top:441px;">см</div>
<div class="t " style="left:1000px;top:469px;">По ширине сечения EZ</div>
<div class="inp" style="left:1167px;top:462px;width:51px;height:24px;"><div class="t" style="left:6px;top:3px">0</div></div>
<div class="t " style="left:1227px;top:467px;">см</div>
<div class="cb" style="left:986px;top:503px;width:16px;height:16px;"><svg width="14" height="14" viewBox="0 0 14 14" style="position:absolute;left:0;top:0"><path d="M1.7 6.9 L5.3 10.5 L12.2 3.3" stroke="#353535" stroke-width="1.3" fill="none"/></svg></div>
<div class="t " style="left:1005px;top:504px;">Учитывать в расчете точный размер сечения</div>
<div class="cb" style="left:986px;top:539.5px;width:16px;height:16px;"></div>
<div class="t " style="left:1005px;top:533px;">Учитывать эффекты 1-го рода</div>
<div class="t " style="left:1005px;top:549px;letter-spacing:-0.15px">(Несовершенства геометрии конструкции)</div>
<div class="cb" style="left:986px;top:572px;width:16px;height:16px;"></div>
<div class="t " style="left:1005px;top:573px;">Эффекты 2-го рода</div>
<div class="cmbd" style="left:1146px;top:568px;width:144px;height:24px;"><div class="t" style="left:3px;top:4px;color:#838383;width:116px;overflow:hidden;letter-spacing:-0.3px">Жесткость+Кривизна</div><svg style="position:absolute;right:4px;top:7px" width="12" height="8" viewBox="0 0 12 8"><path d="M2.4 2.3 L6.6 6.6 L10.8 2.3" stroke="#a6a6a6" stroke-width="1" fill="none"/></svg></div>
<div class="cb" style="left:986px;top:598px;width:16px;height:16px;"><svg width="14" height="14" viewBox="0 0 14 14" style="position:absolute;left:0;top:0"><path d="M1.7 6.9 L5.3 10.5 L12.2 3.3" stroke="#353535" stroke-width="1.3" fill="none"/></svg></div>
<div class="t " style="left:1005px;top:599px;letter-spacing:-0.17px">Вычислять коэффициент</div>
<div class="a ser" style="left:1175px;top:581.92px;font-size:19px;line-height:38px;height:38px;color:#333;">α</div>
<div class="a ar" style="left:1183.6px;top:597.53px;font-size:10px;line-height:20px;height:20px;color:#333;">cw</div>
<div class="red" style="left:985px;top:198px;width:306px;height:34px;"></div>
<div class="red" style="left:988px;top:255px;width:304px;height:160px;"></div>
<div class="red" style="left:980px;top:529px;width:314px;height:89px;"></div>
<div class="tbl" style="left:988px;top:624px;width:301px;height:210px">
<div class="a" style="left:1px;top:1px;width:297px;height:206px;overflow:hidden">
<div class="hs" style="left:134px;top:0px;width:1px;height:24px;"></div>
<div class="hs" style="left:269px;top:0px;width:1px;height:24px;"></div>
<div class="t" style="left:141px;top:5px">C20/25 (МПа)</div>
<div class="a" style="left:4px;top:24px;width:131px;height:19px;background:#dcdcdc"></div>
<div class="a" style="left:136px;top:24px;width:134px;height:19px;background:#dcdcdc"></div>
<div class="a" style="left:0px;top:43px;width:276px;height:1px;background:#f2f2f2"></div>
<div class="t" style="left:6px;top:27px">E_cm</div>
<div class="t" style="left:141px;top:27px">30000.00</div>
<div class="a" style="left:4px;top:44px;width:131px;height:19px;background:#dcdcdc"></div>
<div class="a" style="left:136px;top:44px;width:134px;height:19px;background:#dcdcdc"></div>
<div class="a" style="left:0px;top:63px;width:276px;height:1px;background:#f2f2f2"></div>
<div class="t" style="left:6px;top:47px">f_ck</div>
<div class="t" style="left:141px;top:47px">20.00</div>
<div class="a" style="left:4px;top:64px;width:131px;height:19px;background:#dcdcdc"></div>
<div class="a" style="left:136px;top:64px;width:134px;height:19px;background:#dcdcdc"></div>
<div class="a" style="left:0px;top:83px;width:276px;height:1px;background:#f2f2f2"></div>
<div class="t" style="left:6px;top:67px">f_ck_cube</div>
<div class="t" style="left:141px;top:67px">25.00</div>
<div class="a" style="left:4px;top:84px;width:131px;height:19px;background:#dcdcdc"></div>
<div class="a" style="left:136px;top:84px;width:134px;height:19px;background:#dcdcdc"></div>
<div class="a" style="left:0px;top:103px;width:276px;height:1px;background:#f2f2f2"></div>
<div class="t" style="left:6px;top:87px">f_cm</div>
<div class="t" style="left:141px;top:87px">28.00</div>
<div class="a" style="left:4px;top:104px;width:131px;height:19px;background:#dcdcdc"></div>
<div class="a" style="left:136px;top:104px;width:134px;height:19px;background:#dcdcdc"></div>
<div class="a" style="left:0px;top:123px;width:276px;height:1px;background:#f2f2f2"></div>
<div class="t" style="left:6px;top:107px">f_ctm</div>
<div class="t" style="left:141px;top:107px">2.20</div>
<div class="a" style="left:4px;top:124px;width:131px;height:19px;background:#dcdcdc"></div>
<div class="a" style="left:136px;top:124px;width:134px;height:19px;background:#dcdcdc"></div>
<div class="a" style="left:0px;top:143px;width:276px;height:1px;background:#f2f2f2"></div>
<div class="t" style="left:6px;top:127px">f_ctk_005</div>
<div class="t" style="left:141px;top:127px">1.50</div>
<div class="a" style="left:4px;top:144px;width:131px;height:19px;background:#dcdcdc"></div>
<div class="a" style="left:136px;top:144px;width:134px;height:19px;background:#dcdcdc"></div>
<div class="a" style="left:0px;top:163px;width:276px;height:1px;background:#f2f2f2"></div>
<div class="t" style="left:6px;top:147px">f_ctk_095</div>
<div class="t" style="left:141px;top:147px">2.90</div>
<div class="a" style="left:4px;top:164px;width:131px;height:19px;background:#dcdcdc"></div>
<div class="a" style="left:136px;top:164px;width:134px;height:19px;background:#dcdcdc"></div>
<div class="a" style="left:0px;top:183px;width:276px;height:1px;background:#f2f2f2"></div>
<div class="t" style="left:6px;top:167px">Eps_c1 (*1000)</div>
<div class="t" style="left:141px;top:167px">2.00</div>
<div class="a" style="left:4px;top:184px;width:131px;height:19px;background:#dcdcdc"></div>
<div class="a" style="left:136px;top:184px;width:134px;height:19px;background:#dcdcdc"></div>
<div class="a" style="left:0px;top:203px;width:276px;height:1px;background:#f2f2f2"></div>
<div class="t" style="left:6px;top:187px">Eps_cu1 (*1000)</div>
<div class="t" style="left:141px;top:187px">3.50</div>
<div class="a" style="left:4px;top:204px;width:131px;height:19px;background:#dcdcdc"></div>
<div class="a" style="left:136px;top:204px;width:134px;height:19px;background:#dcdcdc"></div>
<div class="a" style="left:0px;top:223px;width:276px;height:1px;background:#f2f2f2"></div>
<div class="a" style="left:135px;top:24px;width:1px;height:190px;background:#f6f6f6"></div>
<div class="sb" style="left:277px;top:0px;width:20px;height:206px;"></div>
<div class="th" style="left:277px;top:21px;width:19px;height:105px;"></div>
</div></div>
<svg class="a" style="left:1270px;top:630px" width="14" height="14" viewBox="-7 -7 14 14"><path d="M-4.5 2 L0 -2.5 L4.5 2" stroke="#606060" stroke-width="2.1" fill="none"/></svg>
<svg class="a" style="left:1270px;top:815px" width="14" height="14" viewBox="-7 -7 14 14"><path d="M-4.5 -2 L0 2.5 L4.5 -2" stroke="#606060" stroke-width="2.1" fill="none"/></svg>
</body></html>
